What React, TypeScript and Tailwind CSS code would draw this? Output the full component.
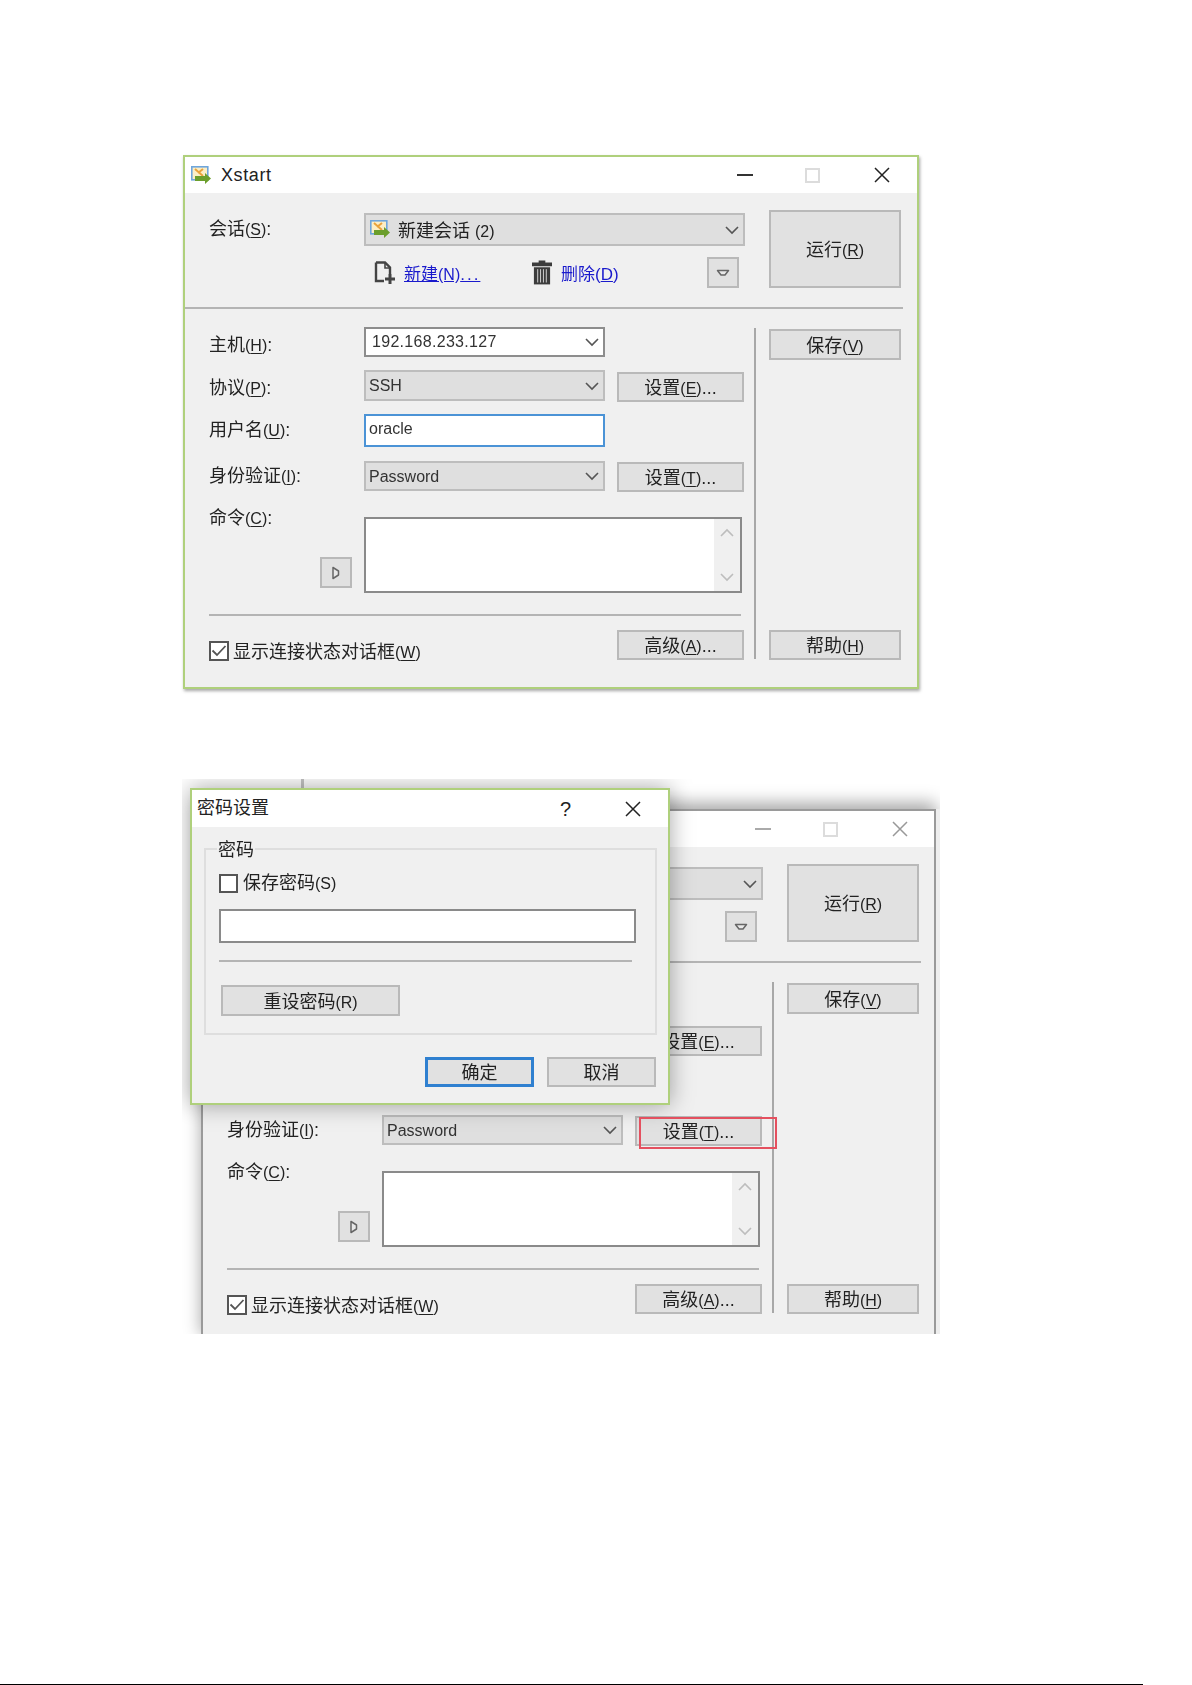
import React from "react";

const M = ({ c }: { c: string }) => (
  <span className="text-[16px]">(<u className="underline underline-offset-2">{c}</u>)</span>
);

const Chevron = ({ className = "", color = "#555" }: { className?: string; color?: string }) => (
  <svg width="16" height="10" viewBox="0 0 16 10" className={className}>
    <path d="M2 2 L8 8 L14 2" fill="none" stroke={color} strokeWidth="1.6" />
  </svg>
);

const SessionIcon = ({ className = "" }: { className?: string }) => (
  <svg width="21" height="19" viewBox="0 0 21 19" className={className}>
    <rect x="0.8" y="0.8" width="16" height="13" fill="#fbeec6" stroke="#6fa6dc" strokeWidth="1.6" />
    <path d="M4 3 L12 10 M12 3 L7 7" stroke="#e9a33c" strokeWidth="2" />
    <path d="M4 10 H14 V7 L20 12.5 L14 18 V15 H4 Z" fill="#6b9e2c" />
  </svg>
);

const NewIcon = () => (
  <svg width="22" height="24" viewBox="0 0 22 24" className="shrink-0">
    <path d="M2 1.5 H11 L16 6.5 V13 M2 1.5 V20 H10" fill="none" stroke="#444" strokeWidth="2.4" />
    <path d="M11 2 V7 H16" fill="none" stroke="#444" strokeWidth="1.6" />
    <path d="M16 13 V23 M11 18 H21" stroke="#444" strokeWidth="3" />
  </svg>
);

const TrashIcon = () => (
  <svg width="20" height="25" viewBox="0 0 21 25" className="ml-[1px] shrink-0">
    <path d="M7 0 H14 V2 H21 V6 H0 V2 H7 Z" fill="#3c3c3c" />
    <path d="M2 7 H19 V25 H2 Z" fill="#3c3c3c" />
    <path d="M6 9 V23 M9 9 V23 M12 9 V23 M15 9 V23" stroke="#d8d8d8" strokeWidth="1" />
  </svg>
);

const CloseIcon = ({ color }: { color: string }) => (
  <svg width="16" height="16" viewBox="0 0 16 16" className="shrink-0">
    <path d="M1 1 L15 15 M15 1 L1 15" stroke={color} strokeWidth="1.5" />
  </svg>
);

const Btn = ({ className = "", children }: { className?: string; children: React.ReactNode }) => (
  <div className={`flex items-center justify-center border-2 border-[#b9b9b9] bg-[#e1e1e1] pt-[3px] text-[18px] text-[#222] shrink-0 ${className}`}>
    {children}
  </div>
);

const Combo = ({ className = "", text }: { className?: string; text: string }) => (
  <div className={`flex items-center justify-between w-[241px] border-2 border-[#bdbdbd] bg-[#dfdfdf] pl-[3px] pr-[3px] text-[16px] text-[#333] shrink-0 ${className}`}>
    <span className="pt-[1px]">{text}</span>
    <Chevron />
  </div>
);

const SmallArrow = ({ dir }: { dir: "down" | "right" }) => (
  <svg width="14" height="14" viewBox="0 0 14 14">
    {dir === "down" ? (
      <path d="M1.5 4.5 H12.5 L9 9 H5 Z" fill="#e8e8e8" stroke="#666" strokeWidth="1.5" strokeLinejoin="round" />
    ) : (
      <path d="M4 1.5 V12.5 L9.5 9 V5 Z" fill="#e8e8e8" stroke="#666" strokeWidth="1.5" strokeLinejoin="round" />
    )}
  </svg>
);

function XstartWindow({ dimmed }: { dimmed: boolean }) {
  return (
    <div
      className={`flex flex-col shrink-0 border-2 bg-[#f0f0f0] ${
        dimmed
          ? "w-[735px] h-[532px] border-[#9a9a9a] shadow-[0_-6px_16px_rgba(0,0,0,0.35)]"
          : "w-[736px] h-[534px] border-[#afd07c] shadow-[1px_2px_3px_rgba(0,0,0,0.35)]"
      }`}
    >
      {/* title bar */}
      <div className="flex items-center h-[36px] bg-white shrink-0">
        {!dimmed && <SessionIcon className="ml-[6px] shrink-0" />}
        {!dimmed && <span className="ml-[9px] text-[18px] tracking-[0.6px] text-[#222]">Xstart</span>}
        <div className={`ml-auto w-[16px] h-[2px] ${dimmed ? "bg-[#aaa]" : "bg-[#333]"}`} />
        <div className="ml-[52px] w-[15px] h-[15px] border-2 border-[#dcdcdc]" />
        <div className={`ml-[54px] ${dimmed ? "mr-[26px]" : "mr-[27px]"}`}>
          <CloseIcon color={dimmed ? "#999" : "#222"} />
        </div>
      </div>

      {/* session section */}
      <div className="flex items-start h-[114px] shrink-0 pl-[24px] pt-[20px] text-[#222]">
        <div className="w-[155px] h-[33px] flex items-center text-[18px] shrink-0">
          {!dimmed && <span>会话<M c="S" />:</span>}
        </div>
        <div className="flex flex-col w-[381px] shrink-0">
          <div className="flex items-center h-[33px] border-2 border-[#bdbdbd] bg-[#dfdfdf] pl-[4px] pr-[3px] text-[18px]">
            {!dimmed && <SessionIcon className="shrink-0" />}
            {!dimmed && <span className="ml-[7px] pt-[3px]">新建会话 <span className="text-[16px]">(2)</span></span>}
            <Chevron className="ml-auto" />
          </div>
          <div className="flex items-center h-[31px] mt-[11px]">
            {!dimmed && <div className="ml-[10px]"><NewIcon /></div>}
            {!dimmed && (
              <a className="ml-[8px] w-[127px] text-[17px] text-[#1a1acc] underline pt-[4px] shrink-0">
                新建<span className="text-[16px]">(N)</span><span className="tracking-[2px]">...</span>
              </a>
            )}
            {!dimmed && <TrashIcon />}
            {!dimmed && (
              <span className="ml-[9px] text-[17px] text-[#1a1acc] pt-[4px]">
                删除<span className="text-[17px]">(<u>D</u>)</span>
              </span>
            )}
            <Btn className="ml-auto mr-[6px] w-[32px] h-[31px] !pt-0"><SmallArrow dir="down" /></Btn>
          </div>
        </div>
        <Btn className="ml-[24px] w-[132px] h-[78px] -mt-[3px]">
          <span>运行<M c="R" /></span>
        </Btn>
      </div>

      <div className="h-[2px] w-[718px] bg-[#b4b4b4] shrink-0" />

      {/* form section */}
      <div className="flex pl-[24px] pt-[18px] text-[18px] text-[#222]">
        <div className="flex flex-col w-[536px] shrink-0">
          <div className="flex h-[30px]">
            <div className="w-[155px] pt-[5px] shrink-0">{!dimmed && <span>主机<M c="H" />:</span>}</div>
            {!dimmed && (
              <div className="flex items-center justify-between w-[241px] border-2 border-[#8d8d8d] bg-white pl-[6px] pr-[3px] text-[16px] tracking-[0.3px] text-[#333]">
                <span>192.168.233.127</span>
                <Chevron />
              </div>
            )}
          </div>
          <div className="flex h-[31px] mt-[13px]">
            <div className="w-[155px] pt-[5px] shrink-0">{!dimmed && <span>协议<M c="P" />:</span>}</div>
            {!dimmed ? <Combo text="SSH" /> : <div className="w-[241px] shrink-0" />}
            <Btn className="ml-[12px] mt-[2px] w-[127px] h-[30px]"><span>设置<M c="E" />...</span></Btn>
          </div>
          <div className="flex h-[33px] mt-[13px]">
            <div className="w-[155px] pt-[3px] shrink-0">{!dimmed && <span>用户名<M c="U" />:</span>}</div>
            {!dimmed && (
              <div className="flex items-center w-[241px] border-2 border-[#4b93d6] bg-white pl-[3px] pb-[3px] text-[16px] text-[#333]">oracle</div>
            )}
          </div>
          <div className="flex h-[30px] mt-[14px]">
            <div className="w-[155px] pt-[2px] shrink-0">身份验证<M c="I" />:</div>
            <Combo text="Password" />
            <Btn className="ml-[12px] mt-[1px] w-[127px] h-[30px]"><span>设置<M c="T" />...</span></Btn>
          </div>
          <div className="flex h-[76px] mt-[26px]">
            <div className="flex flex-col justify-between w-[155px] pr-[12px] shrink-0">
              <div className="-mt-[12px]">命令<M c="C" />:</div>
              <Btn className="self-end w-[32px] h-[31px] mb-[5px] !pt-0"><SmallArrow dir="right" /></Btn>
            </div>
            <div className="flex justify-end w-[378px] border-2 border-[#8a8a8a] bg-white">
              <div className="flex flex-col items-center justify-between w-[26px] h-full bg-[#f0f0f0] py-[9px]">
                <Chevron className="rotate-180" color="#bdbdbd" />
                <Chevron color="#bdbdbd" />
              </div>
            </div>
          </div>
          <div className="h-[2px] w-[532px] bg-[#b4b4b4] mt-[21px]" />
          <div className="flex items-start justify-between h-[30px] mt-[14px] pr-[1px]">
            <div className="flex items-center mt-[6px]">
              <div className="flex items-center justify-center w-[20px] h-[20px] border-2 border-[#555] bg-white shrink-0">
                <svg width="16" height="14" viewBox="0 0 16 14">
                  <path d="M1.5 6.5 L6 11 L14.5 2" fill="none" stroke="#555" strokeWidth="1.8" />
                </svg>
              </div>
              <span className="ml-[4px] mt-[3px]">显示连接状态对话框<M c="W" /></span>
            </div>
            <Btn className="w-[127px] h-[30px]"><span>高级<M c="A" />...</span></Btn>
          </div>
        </div>
        <div className="ml-[9px] my-[1px] w-[2px] bg-[#a8a8a8] shrink-0" />
        <div className="flex flex-col justify-between ml-[13px] w-[132px] pt-[2px] shrink-0">
          <Btn className="w-full h-[31px]"><span>保存<M c="V" /></span></Btn>
          <Btn className="w-full h-[30px]"><span>帮助<M c="H" /></span></Btn>
        </div>
      </div>
    </div>
  );
}

function PasswordDialog() {
  return (
    <div className="absolute left-[8px] top-[9px] flex flex-col w-[480px] h-[317px] border-2 border-[#afd07c] bg-[#f0f0f0] shadow-[0_0_22px_rgba(0,0,0,0.35)] text-[18px] text-[#222]">
      <div className="flex items-center h-[37px] bg-white pl-[5px] shrink-0">
        <span>密码设置</span>
        <span className="ml-auto text-[20px]">?</span>
        <div className="ml-[54px] mr-[27px]"><CloseIcon color="#222" /></div>
      </div>
      <div className="mt-[21px] ml-[12px] w-[453px] h-[187px] border-2 border-[#dedede] pl-[13px] shrink-0">
        <div className="-mt-[13px] ml-[-2px] w-fit h-[26px] px-[1px] bg-[#f0f0f0]">密码</div>
        <div className="flex items-center h-[19px] mt-[11px]">
          <div className="w-[19px] h-[19px] border-2 border-[#555] bg-white shrink-0" />
          <span className="ml-[5px]">保存密码<span className="text-[16px]">(S)</span></span>
        </div>
        <div className="w-[417px] h-[34px] mt-[16px] border-2 border-[#8a8a8a] bg-white" />
        <div className="w-[413px] h-[2px] mt-[17px] bg-[#b4b4b4]" />
        <Btn className="ml-[2px] mt-[23px] w-[179px] h-[31px]"><span>重设密码<span className="text-[16px]">(R)</span></span></Btn>
      </div>
      <div className="flex justify-end gap-[13px] mt-[22px] mr-[12px]">
        <Btn className="w-[109px] h-[30px] !border-[#2f80d0] border-[3px]">确定</Btn>
        <Btn className="w-[109px] h-[30px]">取消</Btn>
      </div>
    </div>
  );
}

export default function App() {
  return (
    <div className="flex flex-col w-[1192px] h-[1685px] bg-white overflow-hidden pt-[155px] [font-family:'Liberation_Sans','Noto_Sans_CJK_SC',sans-serif]">
      <div className="ml-[183px] w-fit blur-[0.5px]">
        <XstartWindow dimmed={false} />
      </div>

      <div className="relative ml-[182px] mt-[90px] w-[758px] h-[555px] overflow-hidden shrink-0 blur-[0.5px]">
        <div className="flex pl-[19px] pt-[30px]">
          <XstartWindow dimmed />
          <div className="w-[4px] bg-[#eeeeee] shrink-0" />
        </div>
        <div className="absolute left-[119px] top-0 w-[3px] h-[10px] bg-[#c4c4c4]" />
        <PasswordDialog />
        <div className="absolute left-[457px] top-[338px] w-[138px] h-[32px] border-2 border-[#e4505f]" />
      </div>

      <div className="mt-auto w-[1143px] h-px bg-black shrink-0" />
    </div>
  );
}
